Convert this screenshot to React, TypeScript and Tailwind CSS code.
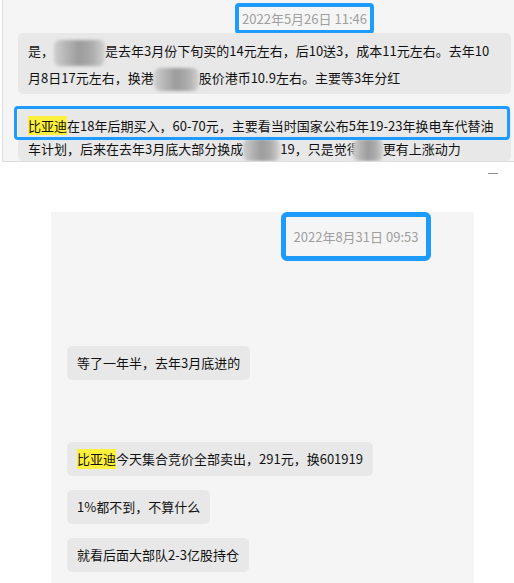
import React from "react";

const font = { fontFamily: '"Noto Sans CJK SC", "Noto Sans", sans-serif' };

// grey mosaic used to hide names in the screenshot
function Blur({ w, h, className = "" }: { w: number; h: number; className?: string }) {
  return (
    <span
      className={`inline-block align-middle rounded-[6px] blur-[1.5px] bg-[linear-gradient(90deg,#cfcfcf,#b3b3b3_25%,#9c9c9c_50%,#acacac_75%,#d2d2d2)] ${className}`}
      style={{ width: w, height: h }}
    />
  );
}

function Hl({ children }: { children: React.ReactNode }) {
  return <span className="bg-[#fff03c]">{children}</span>;
}

function Bubble({ children }: { children: React.ReactNode }) {
  return (
    <div className="self-start h-[34px] flex items-center px-[10px] rounded-[5px] bg-[#e8e8e8] text-[13px] text-[#111] whitespace-nowrap">
      {children}
    </div>
  );
}

export default function App() {
  return (
    <div className="w-[514px] h-[583px] bg-white overflow-hidden flex flex-col" style={font}>
      {/* old chat, cut off */}
      <div className="ml-[2px] h-[162px] shrink-0 border-l border-b border-[#dcdcdc] bg-[#f5f5f5] overflow-hidden flex flex-col">
        <div className="ml-[232px] mt-[3px] w-[139px] h-[34px] border-4 border-[#1e9bff] rounded-[4px] flex items-center justify-center text-[13px] text-[#a0a0a0]">
          2022年5月26日 11:46
        </div>
        <div className="ml-[15px] mt-[-1px] w-[493px] rounded-[5px] bg-[#e8e8e8] pt-[6px] pb-[3px] px-[10px] text-[13px] leading-[23px] text-[#111] whitespace-nowrap">
          <div>
            是，<Blur w={51} h={26} />是去年3月份下旬买的14元左右，后10送3，成本11元左右。去年10
          </div>
          <div>
            月8日17元左右，换港<Blur w={45} h={23} />股价港币10.9左右。主要等3年分红
          </div>
        </div>
        <div className="relative ml-[15px] mt-[14px] w-[493px] rounded-[5px] bg-[#e8e8e8] pt-[6px] px-[10px] text-[13px] leading-[23px] text-[#111] whitespace-nowrap">
          <div>
            <Hl>比亚迪</Hl>在18年后期买入，60-70元，主要看当时国家公布5年19-23年换电车代替油
          </div>
          <div>
            车计划，后来在去年3月底大部分换成<Blur w={37} h={22} />19，只是觉得
            <Blur w={30} h={22} className="-ml-[7px]" />更有上涨动力
          </div>
          <div className="absolute left-[-4px] top-[-2px] w-[496px] h-[34px] border-[3px] border-[#1e9bff] rounded-[4px]" />
        </div>
      </div>

      <div className="h-[50px] shrink-0 flex justify-end pt-[11px] pr-[16px]">
        <div className="w-[10px] h-px bg-[#8c8c8c]" />
      </div>

      {/* current chat */}
      <div className="ml-[51px] w-[423px] flex-1 bg-[#f5f5f5] flex flex-col">
        <div className="ml-[230px] w-[150px] h-[49px] border-[5px] border-[#1e9bff] rounded-[6px] flex items-center justify-center text-[13px] text-[#9e9e9e]">
          2022年8月31日 09:53
        </div>
        <div className="flex flex-col pl-[16px] mt-[85px]">
          <Bubble>等了一年半，去年3月底进的</Bubble>
          <div className="h-[62px]" />
          <div className="flex flex-col gap-[14px]">
            <Bubble>
              <Hl>比亚迪</Hl>今天集合竞价全部卖出，291元，换601919
            </Bubble>
            <Bubble>1%都不到，不算什么</Bubble>
            <Bubble>就看后面大部队2-3亿股持仓</Bubble>
          </div>
        </div>
      </div>
    </div>
  );
}
